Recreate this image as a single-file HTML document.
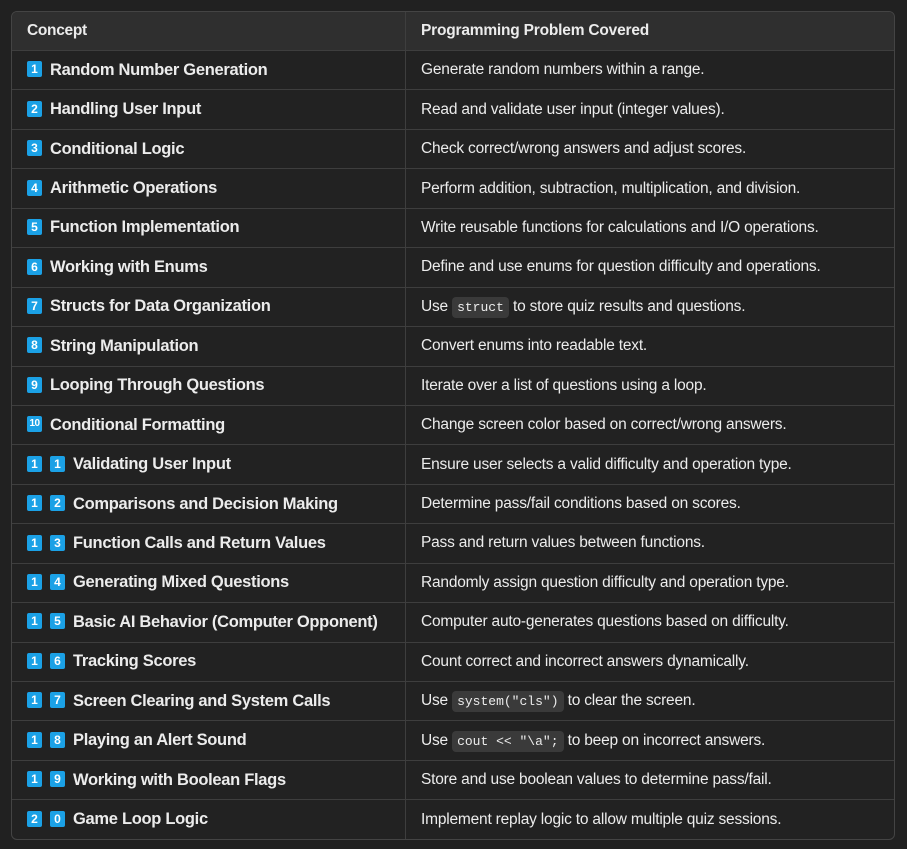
<!DOCTYPE html>
<html><head><style>
html,body{margin:0;background:#212121;width:907px;height:849px;overflow:hidden}
table{position:absolute;left:11px;top:11px;width:884px;border-collapse:separate;border-spacing:0;border:1px solid #444;border-radius:6px;overflow:hidden;font-family:"Liberation Sans",sans-serif;font-size:15.5px;color:#ececec;background:#222}
th,td{text-align:left;padding:0 15px;height:38.45px;border-bottom:1px solid #3e3e3e;white-space:nowrap;letter-spacing:-0.2px;vertical-align:middle}
th{background:#2f2f2f;font-weight:bold;height:38px;}
tr:last-child td{border-bottom:none}
th:first-child,td:first-child{width:363px;border-right:1px solid #3e3e3e;font-weight:bold;font-size:16.5px;letter-spacing:-0.3px}
th:first-child{font-size:15.5px}
.b{display:inline-block;width:15px;height:16px;background:#1ba1e6;color:#fff;font-size:12px;font-weight:bold;text-align:center;line-height:16px;border-radius:2px;vertical-align:middle;margin-right:8px;letter-spacing:0;position:relative;top:-1px}
code{font-family:"Liberation Mono",monospace;font-size:13px;background:#3a3a3a;padding:3px 5px;border-radius:4px;letter-spacing:0}
</style></head><body>
<table>
<tr><th>Concept</th><th>Programming Problem Covered</th></tr>
<tr><td><span class="b">1</span>Random Number Generation</td><td>Generate random numbers within a range.</td></tr>
<tr><td><span class="b">2</span>Handling User Input</td><td>Read and validate user input (integer values).</td></tr>
<tr><td><span class="b">3</span>Conditional Logic</td><td>Check correct/wrong answers and adjust scores.</td></tr>
<tr><td><span class="b">4</span>Arithmetic Operations</td><td>Perform addition, subtraction, multiplication, and division.</td></tr>
<tr><td><span class="b">5</span>Function Implementation</td><td>Write reusable functions for calculations and I/O operations.</td></tr>
<tr><td><span class="b">6</span>Working with Enums</td><td>Define and use enums for question difficulty and operations.</td></tr>
<tr><td><span class="b">7</span>Structs for Data Organization</td><td>Use <code>struct</code> to store quiz results and questions.</td></tr>
<tr><td><span class="b">8</span>String Manipulation</td><td>Convert enums into readable text.</td></tr>
<tr><td><span class="b">9</span>Looping Through Questions</td><td>Iterate over a list of questions using a loop.</td></tr>
<tr><td><span class="b" style="font-size:10px;letter-spacing:-0.5px">10</span>Conditional Formatting</td><td>Change screen color based on correct/wrong answers.</td></tr>
<tr><td><span class="b">1</span><span class="b">1</span>Validating User Input</td><td>Ensure user selects a valid difficulty and operation type.</td></tr>
<tr><td><span class="b">1</span><span class="b">2</span>Comparisons and Decision Making</td><td>Determine pass/fail conditions based on scores.</td></tr>
<tr><td><span class="b">1</span><span class="b">3</span>Function Calls and Return Values</td><td>Pass and return values between functions.</td></tr>
<tr><td><span class="b">1</span><span class="b">4</span>Generating Mixed Questions</td><td>Randomly assign question difficulty and operation type.</td></tr>
<tr><td><span class="b">1</span><span class="b">5</span>Basic AI Behavior (Computer Opponent)</td><td>Computer auto-generates questions based on difficulty.</td></tr>
<tr><td><span class="b">1</span><span class="b">6</span>Tracking Scores</td><td>Count correct and incorrect answers dynamically.</td></tr>
<tr><td><span class="b">1</span><span class="b">7</span>Screen Clearing and System Calls</td><td>Use <code>system("cls")</code> to clear the screen.</td></tr>
<tr><td><span class="b">1</span><span class="b">8</span>Playing an Alert Sound</td><td>Use <code>cout &lt;&lt; "\a";</code> to beep on incorrect answers.</td></tr>
<tr><td><span class="b">1</span><span class="b">9</span>Working with Boolean Flags</td><td>Store and use boolean values to determine pass/fail.</td></tr>
<tr><td><span class="b">2</span><span class="b">0</span>Game Loop Logic</td><td>Implement replay logic to allow multiple quiz sessions.</td></tr>
</table>
</body></html>
